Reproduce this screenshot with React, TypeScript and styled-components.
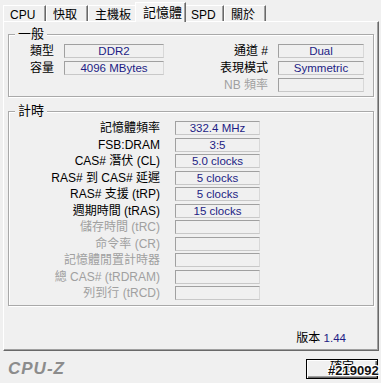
import React from "react";
import styled, { createGlobalStyle } from "styled-components";

const GlobalStyle = createGlobalStyle`
  html, body {
    margin: 0;
    padding: 0;
    background: #f0f0f0;
  }
  body {
    font-family: "Liberation Sans", "Noto Sans CJK TC", sans-serif;
    font-size: 12px;
    color: #000;
  }
`;

const Window = styled.div`
  width: 381px;
  height: 383px;
  display: flex;
  flex-direction: column;
  background: #f0f0f0;
  overflow: hidden;
`;

const TabBar = styled.div`
  display: flex;
  align-items: flex-end;
  height: 21px;
  padding-left: 3px;
  box-sizing: border-box;
  position: relative;
  z-index: 1;
`;

const Tab = styled.div<{ $active?: boolean; $w: number }>`
  box-sizing: border-box;
  width: ${(p) => p.$w}px;
  height: ${(p) => (p.$active ? 20 : 16)}px;
  margin: 0 ${(p) => (p.$active ? -2 : 0)}px ${(p) => (p.$active ? -1 : 0)}px;
  padding: ${(p) => (p.$active ? "3px 0 0 7px" : "2px 0 0 6px")};
  border: 1px solid #fff;
  border-bottom: none;
  border-right: 1px solid #696969;
  box-shadow: inset -1px 0 0 #a0a0a0;
  background: ${(p) => (p.$active ? "#f5f5f5" : "#f0f0f0")};
  font-size: ${(p) => (p.$active ? 13 : 12)}px;
  line-height: 14px;
  white-space: nowrap;
  position: relative;
  z-index: ${(p) => (p.$active ? 2 : 1)};
`;

const Page = styled.div`
  flex: 0 0 330px;
  box-sizing: border-box;
  margin: 0 2px 0 3px;
  border: 1px solid;
  border-color: #fff #696969 #696969 #fff;
  box-shadow: inset -1px -1px 0 #a0a0a0;
  padding: 5px 4px 0 4px;
  display: flex;
  flex-direction: column;
`;

const Group = styled.fieldset<{ $mt?: number }>`
  margin: ${(p) => p.$mt ?? 0}px 0 0 0;
  padding: 0;
  border: 1px solid #a9a9a9;
  box-shadow: inset 1px 1px 0 #fff, 1px 1px 0 #fff;
  min-width: 0;
`;

const Legend = styled.legend`
  margin-left: 6px;
  padding: 0 3px;
  font-size: 13px;
  line-height: 14px;
  background: #f0f0f0;
`;

const GeneralGrid = styled.div`
  display: grid;
  grid-template-columns: 45px 100px 1fr 86px;
  column-gap: 10px;
  row-gap: 3px;
  padding: 3px 9px 4px 0;
`;

const TimingGrid = styled.div`
  display: grid;
  grid-template-columns: 151px 85px;
  column-gap: 15px;
  grid-auto-rows: 14px;
  row-gap: 2.5px;
  padding: 3px 0 5px 0;
`;

const Label = styled.div<{ $dim?: boolean }>`
  text-align: right;
  height: 14px;
  line-height: 14px;
  white-space: nowrap;
  font-size: 12px;
  color: ${(p) => (p.$dim ? "#a0a0a0" : "#000")};
`;

const Value = styled.div`
  box-sizing: border-box;
  height: 14px;
  border: 1px solid;
  border-color: #a0a0a0 #d8d8d8 #c8c8c8 #a0a0a0;
  background: #f0f0f0;
  color: #1c1c84;
  font-size: 11.5px;
  line-height: 12px;
  text-align: center;
  white-space: nowrap;
`;

const VersionRow = styled.div`
  margin-top: auto;
  padding: 0 28px 5px 0;
  text-align: right;
  font-size: 12px;
  line-height: 14px;
  color: #000;

  span {
    color: #1c1c84;
    font-size: 11.5px;
  }
`;

const Footer = styled.div`
  flex: 1;
  display: flex;
  align-items: center;
  justify-content: space-between;
  padding: 3px 3px 0 8px;
`;

const Logo = styled.div`
  font-family: "Liberation Sans", sans-serif;
  font-weight: bold;
  font-style: italic;
  font-size: 17px;
  letter-spacing: 1px;
  color: #8c8c8c;
`;

const OkButton = styled.div`
  position: relative;
  box-sizing: border-box;
  width: 72px;
  height: 20px;
  border: 1px solid #000;
  box-shadow: inset 1px 1px 0 #fff, inset -1px -1px 0 #696969,
    inset -2px -2px 0 #a0a0a0;
  background: #f0f0f0;
  text-align: center;
  font-size: 12px;
  line-height: 14px;
`;

const Watermark = styled.span`
  position: absolute;
  left: 21px;
  top: 4px;
  font-family: "Liberation Sans", sans-serif;
  font-weight: bold;
  font-size: 13px;
  line-height: 14px;
  color: #111;
  text-shadow: -1px -1px 0 #fff, 1px -1px 0 #fff, -1px 1px 0 #fff,
    1px 1px 0 #fff;
`;

const tabs = [
  { name: "CPU", w: 43 },
  { name: "快取", w: 42 },
  { name: "主機板", w: 49 },
  { name: "記憶體", w: 51, active: true },
  { name: "SPD", w: 40 },
  { name: "關於", w: 42 },
];

const timings: { label: string; value?: string }[] = [
  { label: "記憶體頻率", value: "332.4 MHz" },
  { label: "FSB:DRAM", value: "3:5" },
  { label: "CAS# 潛伏 (CL)", value: "5.0 clocks" },
  { label: "RAS# 到 CAS# 延遲", value: "5 clocks" },
  { label: "RAS# 支援 (tRP)", value: "5 clocks" },
  { label: "週期時間 (tRAS)", value: "15 clocks" },
  { label: "儲存時間 (tRC)" },
  { label: "命令率 (CR)" },
  { label: "記憶體閒置計時器" },
  { label: "總 CAS# (tRDRAM)" },
  { label: "列到行 (tRCD)" },
];

export default function App() {
  return (
    <Window>
      <GlobalStyle />
      <TabBar>
        {tabs.map((t) => (
          <Tab key={t.name} $w={t.w} $active={t.active}>
            {t.name}
          </Tab>
        ))}
      </TabBar>
      <Page>
        <Group>
          <Legend>一般</Legend>
          <GeneralGrid>
            <Label>類型</Label>
            <Value>DDR2</Value>
            <Label>通道 #</Label>
            <Value>Dual</Value>
            <Label>容量</Label>
            <Value>4096 MBytes</Value>
            <Label>表現模式</Label>
            <Value>Symmetric</Value>
            <div />
            <div />
            <Label $dim>NB 頻率</Label>
            <Value />
          </GeneralGrid>
        </Group>
        <Group $mt={7}>
          <Legend>計時</Legend>
          <TimingGrid>
            {timings.map((t) => (
              <React.Fragment key={t.label}>
                <Label $dim={!t.value}>{t.label}</Label>
                <Value>{t.value}</Value>
              </React.Fragment>
            ))}
          </TimingGrid>
        </Group>
        <VersionRow>
          版本 <span>1.44</span>
        </VersionRow>
      </Page>
      <Footer>
        <Logo>CPU-Z</Logo>
        <OkButton>
          確定
          <Watermark>#219092</Watermark>
        </OkButton>
      </Footer>
    </Window>
  );
}
